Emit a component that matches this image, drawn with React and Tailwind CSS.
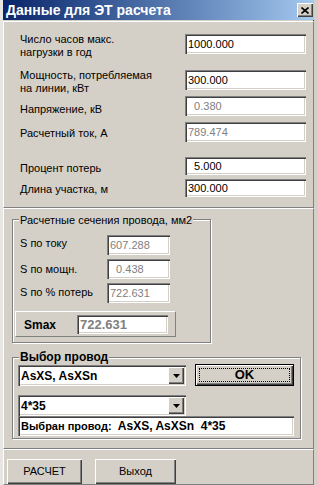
import React from 'react'

const sunken = "bg-white shadow-[inset_1px_1px_0_#808080,inset_2px_2px_0_#404040,inset_-1px_-1px_0_#ffffff,inset_-2px_-2px_0_#d4d0c8]"
const raised = "bg-[#d4d0c8] shadow-[inset_1px_1px_0_#ffffff,inset_-1px_-1px_0_#404040,inset_-2px_-2px_0_#808080]"
const panel = "border-t border-l border-white border-b border-r border-b-[#808080] border-r-[#808080]"
const group = "border border-[#808080] shadow-[inset_1px_1px_0_#ffffff,1px_1px_0_#ffffff]"

function Field({ value, disabled, h = 20, w = 121, bold }) {
  return (
    <div
      className={`${sunken} flex items-center pl-[3px] whitespace-pre ${disabled ? "text-[#808080]" : "text-black"} ${bold ? "font-bold text-[13px]" : "text-[11px]"}`}
      style={{ width: w, height: h }}
    >
      {value}
    </div>
  )
}

function Combo({ value }) {
  return (
    <div className={`${sunken} w-[168px] h-[21px] flex items-center justify-between pl-[3px] pr-[2px] text-[12px] font-bold`}>
      <span>{value}</span>
      <div className={`${raised} w-[16px] h-[17px] flex items-center justify-center`}>
        <svg width="7" height="4" viewBox="0 0 7 4"><path d="M0 0h7L3.5 4z" fill="#000" /></svg>
      </div>
    </div>
  )
}

function Row({ label, value, disabled, rowH, labelPt, inputMt = 0, inputH = 20 }) {
  return (
    <div className="flex items-start" style={{ height: rowH }}>
      <div className="w-[181px] pl-[16px] leading-[13px]" style={{ paddingTop: labelPt }}>{label}</div>
      <div style={{ marginTop: inputMt }}>
        <Field value={value} disabled={disabled} h={inputH} />
      </div>
    </div>
  )
}

function SRow({ label, value, pt }) {
  return (
    <div className="flex items-start h-[24px]">
      <div className="w-[94px] pl-[7px] leading-[13px]" style={{ paddingTop: pt }}>{label}</div>
      <Field value={value} disabled w={63} />
    </div>
  )
}

export default function App() {
  return (
    <div className="w-[318px] h-[485px] bg-[#d4d0c8] overflow-hidden font-['Liberation_Sans',Arial,sans-serif] text-[11px] text-black border-l-[3px] border-l-[#e8e6e2] border-r-[4px] border-r-[#d4d0c8] shadow-[inset_-1px_0_0_#404040] flex flex-col">
      {/* title bar */}
      <div className="h-[20px] flex items-center justify-between bg-gradient-to-r from-[#0a246a] to-[#a6caf0] pl-[3px] pr-[1px] -mr-[2px]">
        <span className="text-white font-bold text-[14px]">Данные для ЭТ расчета</span>
        <div className={`${raised} w-[16px] h-[14px] mr-[2px] flex items-center justify-center`}>
          <svg width="8" height="7" viewBox="0 0 8 7">
            <path d="M0.5 0.5l7 6M7.5 0.5l-7 6" stroke="#000" strokeWidth="1.6" />
          </svg>
        </div>
      </div>

      {/* panel 1 */}
      <div className={`${panel} mt-[1px] h-[187px] pt-[11px]`}>
        <Row label={<>Число часов макс.<br />нагрузки в год</>} value="1000.000" rowH={36} labelPt={0} inputMt={1} />
        <Row label={<>Мощность, потребляемая<br />на линии, кВт</>} value="300.000" rowH={27} labelPt={0} inputMt={1} />
        <Row label="Напряжение, кВ" value="  0.380" disabled rowH={26} labelPt={7} />
        <Row label="Расчетный ток, А" value="789.474" disabled rowH={35} labelPt={5} />
        <Row label="Процент потерь" value="  5.000" rowH={22} labelPt={5} inputH={18} />
        <Row label="Длина участка, м" value="300.000" rowH={22} labelPt={4} inputH={18} />
      </div>

      {/* panel 2 */}
      <div className={`${panel} h-[241px] pt-[10px] pl-[8px]`}>
        <div className={`${group} w-[199px] h-[124px]`}>
          <div className="w-fit -mt-[6px] ml-[6px] px-[1px] bg-[#d4d0c8] leading-[13px]">Расчетные сечения провода, мм2</div>
          <div className="mt-[8px]">
            <SRow label="S по току" value="607.288" pt={2} />
            <SRow label="S по мощн." value="  0.438" pt={4} />
            <SRow label="S по % потерь" value="722.631" pt={3} />
          </div>
          <div className={`${panel} ml-[2px] mt-[4px] w-[161px] h-[26px] flex items-start`}>
            <div className="w-[61px] pl-[8px] pt-[7px] leading-[13px] font-bold text-[12px]">Smax</div>
            <div className="mt-[3px]">
              <Field value="722.631" disabled bold w={91} h={19} />
            </div>
          </div>
        </div>

        <div className={`${group} mt-[14px] w-[289px] h-[82px]`}>
          <div className="w-fit -mt-[8px] ml-[6px] px-[1px] bg-[#d4d0c8] leading-[14px] font-bold text-[12px]">Выбор провод</div>
          <div className="flex items-start ml-[5px]">
            <div className="mt-[1px]">
              <Combo value="AsXS, AsXSn" />
            </div>
            <div className="ml-[9px] w-[99px] h-[22px] border border-black">
              <div className={`${raised} w-full h-full p-[3px]`}>
                <div className="w-full h-full border border-dotted border-black flex items-center justify-center font-bold text-[13px]">OK</div>
              </div>
            </div>
          </div>
          <div className="ml-[5px] mt-[9px]">
            <Combo value="4*35" />
            <div className={`${sunken} w-[276px] h-[20px] flex items-center pl-[3px] font-bold text-[12px] whitespace-pre`}>
              <span className="text-[11px]">Выбран провод:</span>  AsXS, AsXSn  4*35
            </div>
          </div>
        </div>
      </div>

      {/* panel 3 */}
      <div className={`${panel} flex-1 pt-[9px] pl-[3px] flex items-start gap-[13px]`}>
        <button className={`${raised} w-[75px] h-[25px] text-[11px]`}>РАСЧЕТ</button>
        <button className={`${raised} w-[81px] h-[25px] text-[11px]`}>Выход</button>
      </div>
    </div>
  )
}
